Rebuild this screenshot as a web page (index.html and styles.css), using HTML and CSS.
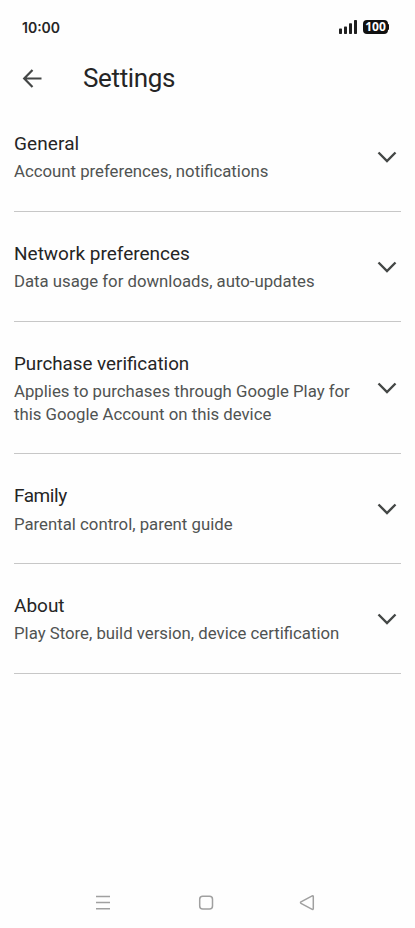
FILE: index.html
```html
<!DOCTYPE html>
<html lang="en">
<head>
<meta charset="utf-8">
<meta name="viewport" content="width=device-width, initial-scale=1">
<title>Settings</title>
<link rel="stylesheet" href="styles.css">
</head>
<body>
<div class="status">
  <span class="time">10:00</span>
  <div class="indicators">
    <svg class="signal" width="18" height="14" viewBox="0 0 18 14" fill="#202020"><rect y="8.500" width="3" height="5.500" rx=".7"/><rect x="5" y="6.500" width="3" height="7.500" rx=".7"/><rect x="10" y="3.300" width="3" height="10.700" rx=".7"/><rect x="15" width="3" height="14" rx=".7"/></svg>
    <span class="battery">100</span>
  </div>
</div>
<header class="bar">
  <svg width="20" height="20" viewBox="0 0 20 20" fill="none" stroke="#444746" stroke-width="2.200"><path d="M19.500 10.500H2.500M10.500 2 2.200 10.500l8.300 8.500"/></svg>
  <h1>Settings</h1>
</header>
<main>
  <section class="row"><div class="text"><h2 class="general">General</h2><p>Account preferences, notifications</p></div><svg class="chev" viewBox="0 0 20 12"><path d="M1.500 1.500 10 10l8.500-8.500"/></svg></section>
  <section class="row"><div class="text"><h2>Network preferences</h2><p>Data usage for downloads, auto-updates</p></div><svg class="chev" viewBox="0 0 20 12"><path d="M1.500 1.500 10 10l8.500-8.500"/></svg></section>
  <section class="row"><div class="text"><h2 class="purchase">Purchase verification</h2><p>Applies to purchases through Google Play for<br>this Google Account on this device</p></div><svg class="chev" viewBox="0 0 20 12"><path d="M1.500 1.500 10 10l8.500-8.500"/></svg></section>
  <section class="row"><div class="text"><h2 class="family">Family</h2><p>Parental control, parent guide</p></div><svg class="chev" viewBox="0 0 20 12"><path d="M1.500 1.500 10 10l8.500-8.500"/></svg></section>
  <section class="row"><div class="text"><h2>About</h2><p>Play Store, build version, device certification</p></div><svg class="chev" viewBox="0 0 20 12"><path d="M1.500 1.500 10 10l8.500-8.500"/></svg></section>
</main>
<nav class="nav">
  <svg width="16" height="16" viewBox="0 0 16 16"><path d="M1 1.500h14M1 7.500h14M1 13.700h14"/></svg>
  <svg width="16" height="16" viewBox="0 0 16 16"><rect x="1.700" y="1.200" width="12.800" height="12.800" rx="3"/></svg>
  <svg width="16" height="16" viewBox="0 0 16 16"><path d="M13.200 .9 2 6.900q-1 .7 0 1.400l11.200 6q1.100.4 1.100-.7V1.600q0-1.100-1.100-.7Z"/></svg>
</nav>
</body>
</html>
```
FILE: styles.css
```css
* { box-sizing: border-box; }
body { margin: 0; height: 928px; background: #fefefe; color: #252525; font-family: Roboto, sans-serif; display: flex; flex-direction: column; overflow: hidden; }
h1, h2, p { margin: 0; font-weight: 400; white-space: nowrap; }
.status { height: 54px; padding: 0 27px 0 22px; display: flex; align-items: center; justify-content: space-between; }
.time { margin-top: 1px; font: 600 14px/20px Inter, sans-serif; }
.indicators { display: flex; align-items: center; gap: 6px; }
.battery { position: relative; width: 25px; height: 14px; border-radius: 4px; background: #111; color: #fff; font: 700 12px/14px "Open Sans", sans-serif; text-align: center; }
.battery::after { content: ""; position: absolute; right: -1px; top: 4px; width: 2px; height: 6px; border-radius: 1px; background: #111; }
.bar { height: 48px; padding-left: 22px; display: flex; align-items: center; gap: 41px; }
h1 { font-size: 26px; line-height: 34px; letter-spacing: -.35px; }
main { padding: .3px 14px 0; }
.row { height: 109.700px; padding: 30px 4px 0 0; border-bottom: 1px solid #c7c7c7; display: flex; justify-content: space-between; }
.row:nth-child(3) { height: 132.800px; }
h2 { font-size: 19px; line-height: 24px; }
.general { letter-spacing: .1px; }
.purchase { font-size: 18.800px; }
.family { letter-spacing: -.45px; }
p { margin-top: 4.200px; color: #505352; font-size: 16.750px; line-height: 23px; }
.chev { width: 20px; height: 12px; align-self: center; margin-top: -29px; fill: none; stroke: #444746; stroke-width: 2.400; }
.nav { margin-top: auto; height: 51px; padding: 0 100px 0 95px; display: flex; align-items: center; justify-content: space-between; }
.nav svg { fill: none; stroke: #a0a0a0; stroke-width: 1.500; }
.nav svg:nth-child(2) { margin-left: 1px; }
```
